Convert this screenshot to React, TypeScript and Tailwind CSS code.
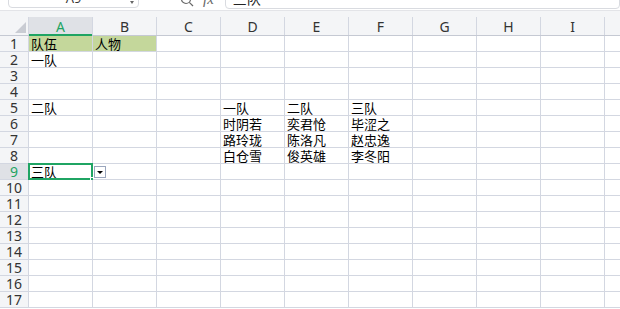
import React from "react";

const cols = ["A", "B", "C", "D", "E", "F", "G", "H", "I", ""];
const data: Record<string, string> = {
  A1: "队伍",
  B1: "人物",
  A2: "一队",
  A5: "二队",
  A9: "三队",
  D5: "一队",
  E5: "二队",
  F5: "三队",
  D6: "时阴若",
  E6: "奕君怆",
  F6: "毕涩之",
  D7: "路玲珑",
  E7: "陈洛凡",
  F7: "赵忠逸",
  D8: "白仓雪",
  E8: "俊英雄",
  F8: "李冬阳",
};

const latin = { fontFamily: '"Noto Sans", "Open Sans", sans-serif' };
const cjk = { fontFamily: '"Noto Sans CJK SC", sans-serif' };

export default function App() {
  const rows = Array.from({ length: 17 }, (_, i) => i + 1);
  return (
    <div className="w-[620px] h-[309px] overflow-hidden bg-white relative">
      {/* formula bar */}
      <div className="h-[11px] overflow-hidden flex items-end border-b border-[#e3e4e8] bg-white">
        <div className="ml-[8px] mb-[2px] w-[131px] h-[20px] shrink-0 rounded-[4px] border border-[#d9dbe0] flex items-center justify-center relative">
          <span className="text-[13px] text-[#333] leading-none" style={latin}>A9</span>
          <span className="absolute right-[4px] top-[12px] w-0 h-0 border-l-[2px] border-r-[2px] border-t-[3px] border-l-transparent border-r-transparent border-t-[#666]" />
        </div>
        <div className="ml-[41px] mb-[3px] flex items-center gap-[9px] text-[#666]">
          <svg width="14" height="14" viewBox="0 0 14 14" fill="none" stroke="#666" strokeWidth="1.2">
            <circle cx="6" cy="6" r="4.5" />
            <path d="M9.3 9.3 L13 13" />
          </svg>
          <span className="italic text-[15px] leading-none" style={{ fontFamily: '"Liberation Serif", serif' }}>fx</span>
        </div>
        <div className="ml-[11px] mb-[1px] flex-1 h-[22px] rounded-[4px] border border-[#d9dbe0] flex items-center pl-[7px]">
          <span className="text-[14px] text-[#222] leading-none" style={cjk}>三队</span>
        </div>
      </div>
      {/* header */}
      <div className="bg-[#f4f5f7] pt-[6px] border-b border-[#c5c9d3] flex h-[25px]">
        <div className="w-[29px] shrink-0 border-r border-[#d3d7e1] relative">
          <svg className="absolute left-[15px] top-[5px]" width="11" height="11" viewBox="0 0 11 11">
            <path d="M11 0 L11 11 L0 11 Z" fill="#c9ccd3" />
          </svg>
        </div>
        {cols.map((c, i) => (
          <div
            key={i}
            className={
              "shrink-0 flex items-center justify-center pt-[2px] text-[14px] leading-none relative " +
              (i === 9 ? "flex-1 " : "w-[64px] border-r border-[#d3d7e1] ") +
              (c === "A" ? "bg-[#dfe1e6] text-[#1fa463]" : "text-[#333]")
            }
            style={latin}
          >
            {c}
            {c === "A" && <span className="absolute left-0 right-0 bottom-[-1px] h-[2px] bg-[#1fa463]" />}
          </div>
        ))}
      </div>
      {/* body */}
      {rows.map((r) => (
        <div key={r} className="flex h-[16px]">
          <div
            className={
              "w-[29px] shrink-0 border-r border-b border-[#d3d7e1] flex items-center justify-center text-[14px] leading-none " +
              (r === 9 ? "bg-[#dfe1e6] text-[#1fa463]" : "bg-[#f4f5f7] text-[#333]")
            }
            style={latin}
          >
            {r}
          </div>
          {cols.map((c, i) => {
            const key = c + r;
            const val = data[key];
            const green = r === 1 && (c === "A" || c === "B");
            return (
              <div
                key={i}
                className={
                  "shrink-0 border-b border-[#d3d7e1] relative flex items-center pl-[2px] text-[13px] leading-none text-black whitespace-nowrap " +
                  (i === 9 ? "flex-1 " : "w-[64px] border-r ") +
                  (green ? "bg-[#c4d79b]" : "bg-white")
                }
                style={cjk}
              >
                {val}
                {key === "A9" && (
                  <>
                    <span className="absolute left-[-1px] top-[-1px] right-[-1px] bottom-[-1px] border-2 border-[#1fa463]" />
                    <span className="absolute right-[-3px] bottom-[-3px] w-[5px] h-[5px] bg-[#1fa463] border border-white" />
                  </>
                )}
                {key === "B9" && (
                  <span className="absolute left-[1px] top-[2px] w-[12px] h-[12px] border border-[#9aa6bd] bg-white flex items-center justify-center">
                    <span className="w-0 h-0 border-l-[3px] border-r-[3px] border-t-[3px] border-l-transparent border-r-transparent border-t-black" />
                  </span>
                )}
              </div>
            );
          })}
        </div>
      ))}
    </div>
  );
}
